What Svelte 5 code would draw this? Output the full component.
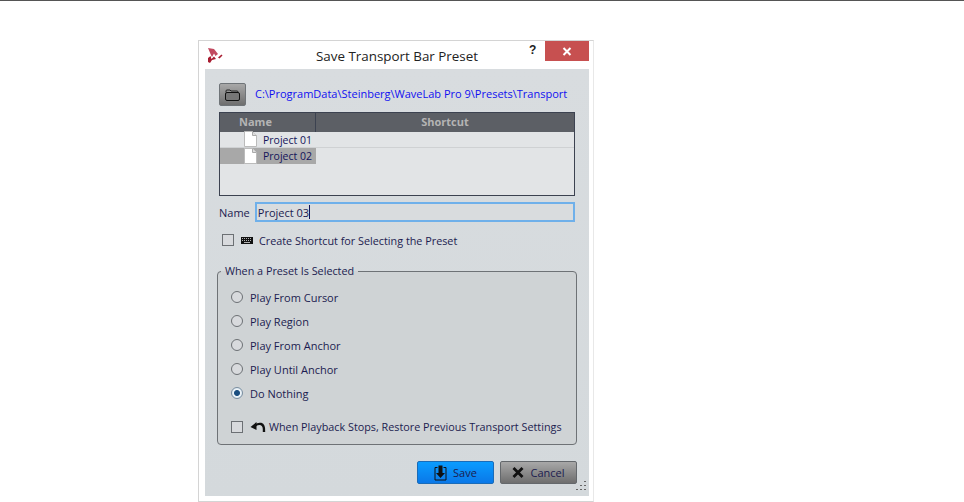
<script>
  const modes = ['Play From Cursor', 'Play Region', 'Play From Anchor', 'Play Until Anchor', 'Do Nothing'];
  const presets = ['Project 01', 'Project 02'];
  let selected = 'Do Nothing';
  let name = 'Project 03';
</script>

<div class="page">
  <div class="dialog">
    <div class="titlebar">
      <svg class="logo" width="17" height="17" viewBox="0 0 17 17">
        <path d="M1 1 L7 2 L11 7 L8.500 9 L7 6.500 L5 10 L3.500 7 Z" fill="#c24a60" />
        <path d="M1 11 L3.500 9 L4.500 12 L7 9.500 L9 12 L5 13 L3 16 L1 15 Z" fill="#a81c30" />
        <path d="M11 10.500 L14.500 7.500 L15.500 8.500 L12.500 11.500 Z" fill="#a81c30" />
      </svg>
      <span class="title">Save Transport Bar Preset</span>
      <span class="help">?</span>
      <span class="close">
        <svg width="10" height="9" viewBox="0 0 10 9"><path d="M1.500 1 L8.500 8 M8.500 1 L1.500 8" stroke="#fff" stroke-width="2" /></svg>
      </span>
    </div>
    <div class="body">
      <div class="pathrow">
        <button class="folder" type="button">
          <svg width="15" height="12" viewBox="0 0 15 12">
            <path d="M1 3.500 V2 Q1 1 2 1 H5 L6 2 H12 Q13 2 13 3 V3.500" fill="none" stroke="#222" />
            <rect x="0.500" y="3.500" width="14" height="8" rx="1.500" fill="#777" stroke="#111" />
          </svg>
        </button>
        <span class="path">C:\ProgramData\Steinberg\WaveLab Pro 9\Presets\Transport</span>
      </div>

      <div class="table">
        <div class="thead">
          <div class="col-name">Name</div>
          <div class="col-short">Shortcut</div>
        </div>
        {#each presets as preset, i}
          <div class="row" class:first={i === 0}>
            <div class="cell" class:sel={i === 1}>
              <svg class="doc" width="13" height="16" viewBox="0 0 13 16">
                <path d="M0.500 0.500 H8.500 L12.500 4.500 V15.500 H0.500 Z" fill="#fff" stroke="#bbb" />
                <path d="M8.500 0.500 V4.500 H12.500" fill="#ddd" stroke="#aaa" />
              </svg>
              <span>{preset}</span>
            </div>
          </div>
        {/each}
      </div>

      <div class="namerow">
        <span class="lbl">Name</span>
        <div class="input"><span>{name}</span><i class="caret"></i></div>
      </div>

      <div class="shortcut">
        <span class="check"></span>
        <svg class="kbd" width="12" height="7" viewBox="0 0 12 7">
          <rect width="12" height="7" fill="#111" />
          <path d="M1 1.500 H11 M1 3.500 H11" stroke="#ddd" stroke-width="0.800" stroke-dasharray="1 1" />
          <path d="M3 5.500 H9" stroke="#ddd" stroke-width="0.800" />
        </svg>
        <span>Create Shortcut for Selecting the Preset</span>
      </div>

      <fieldset class="group">
        <legend>When a Preset Is Selected</legend>
        {#each modes as mode}
          <div class="radio-row">
            <span class="radio" class:on={selected === mode}></span>
            <span>{mode}</span>
          </div>
        {/each}
        <div class="restore">
          <span class="check"></span>
          <svg class="undo" width="16" height="12" viewBox="0 0 16 12">
            <path d="M5 4.500 Q8 2.500 11 3 Q14.500 4 14 11" fill="none" stroke="#111" stroke-width="2.400" />
            <path d="M0.500 6 L6.500 1 V9 Z" fill="#111" />
          </svg>
          <span>When Playback Stops, Restore Previous Transport Settings</span>
        </div>
      </fieldset>

      <div class="buttons">
        <button class="btn save" type="button">
          <svg width="13" height="16" viewBox="0 0 13 16">
            <path d="M3.500 2.500 H1 V15 H12 V2.500 H9.500" fill="none" stroke="#111" />
            <path d="M4.500 0.500 H8.500 V8 H11 L6.500 13 L2 8 H4.500 Z" fill="#111" />
          </svg>
          <span>Save</span>
        </button>
        <button class="btn cancel" type="button">
          <svg width="12" height="11" viewBox="0 0 12 11"><path d="M1.500 1 L10.500 10 M10.500 1 L1.500 10" stroke="#111" stroke-width="2.800" /></svg>
          <span>Cancel</span>
        </button>
      </div>

      <svg class="grip" width="11" height="10" viewBox="0 0 11 10">
        <path d="M9 0 h2 v1 h-2 Z M5 4 h2 v1 h-2 Z M9 4 h2 v1 h-2 Z M1 8 h2 v1 h-2 Z M5 8 h2 v1 h-2 Z M9 8 h2 v1 h-2 Z" fill="#666" />
      </svg>
    </div>
  </div>
</div>

<style>
  :global(body) {
    margin: 0;
    background: #fff;
  }
  .page {
    height: 502px;
    border-top: 1px solid #555;
    padding: 39px 0 0 198px;
    box-sizing: border-box;
    overflow: hidden;
    font-family: "Open Sans", "Noto Sans", sans-serif;
    font-size: 10.800px;
    color: #1c1c50;
  }
  .dialog {
    width: 396px;
    height: 462px;
    box-sizing: border-box;
    border: 1px solid #d4d4d4;
    border-right-color: #e8e8e8;
    background: #fff;
    padding: 0 4px 5px 6px;
    display: flex;
    flex-direction: column;
  }
  .titlebar {
    height: 28px;
    position: relative;
    display: flex;
    align-items: center;
    justify-content: center;
    flex: none;
  }
  .logo {
    position: absolute;
    left: 2px;
    top: 6px;
  }
  .title {
    font-size: 13.400px;
    color: #222;
    margin-top: 2px;
  }
  .help {
    position: absolute;
    left: 324px;
    top: 2px;
    font: bold 12px "Liberation Sans", sans-serif;
    color: #222;
  }
  .close {
    position: absolute;
    right: 0;
    top: 0;
    width: 44px;
    height: 20px;
    background: #c75050;
    display: flex;
    align-items: center;
    justify-content: center;
  }
  .body {
    flex: 1;
    position: relative;
    background: linear-gradient(#d8dcdf, #d4d9dc);
    padding: 14px 12px 0 14px;
    box-sizing: border-box;
  }
  .pathrow {
    display: flex;
    align-items: center;
    gap: 9px;
    height: 23px;
  }
  .folder {
    width: 27px;
    height: 23px;
    padding: 0;
    border: 1px solid #6f7478;
    border-radius: 2px;
    background: linear-gradient(#a8a8a8, #6e6e6e);
    display: flex;
    align-items: center;
    justify-content: center;
  }
  .path {
    color: #1010f0;
    font-size: 11px;
    margin-top: -2px;
  }
  .table {
    width: 356px;
    height: 84px;
    margin-top: 6px;
    box-sizing: border-box;
    border: 1px solid #3c4250;
    background: #e2e4e6;
  }
  .thead {
    display: flex;
    height: 19px;
    background: #5c5f65;
    color: #b4b4b4;
    font-weight: 700;
    font-size: 11px;
    line-height: 18px;
  }
  .col-name {
    width: 96px;
    box-sizing: border-box;
    padding-left: 19px;
    border-right: 1px solid #3c4250;
  }
  .col-short {
    flex: 1;
    text-align: center;
  }
  .row {
    height: 15px;
    border-bottom: 1px solid #cfd1d3;
  }
  .row:not(.first) {
    border-bottom: 0;
  }
  .cell {
    width: 96px;
    height: 100%;
    display: flex;
    align-items: center;
    box-sizing: border-box;
    padding-left: 24px;
    gap: 6px;
    font-size: 10.500px;
    color: #14145a;
  }
  .cell.sel {
    background: #a8a8a8;
    height: 16px;
  }
  .doc {
    flex: none;
    margin-top: -1px;
  }
  .namerow {
    display: flex;
    align-items: center;
    gap: 5px;
    margin-top: 6px;
    height: 20px;
  }
  .lbl {
    font-size: 11px;
  }
  .input {
    width: 320px;
    height: 20px;
    box-sizing: border-box;
    border: 2px solid #6fb0ea;
    background: #d9dcde;
    display: flex;
    align-items: center;
    padding-left: 1px;
    font-size: 11px;
  }
  .caret {
    width: 1px;
    height: 14px;
    background: #14145a;
  }
  .shortcut {
    display: flex;
    align-items: center;
    margin-top: 12px;
    padding-left: 3px;
    height: 12px;
  }
  .check {
    width: 12px;
    height: 12px;
    box-sizing: border-box;
    border: 1px solid #6c7074;
    background: #d8dadd;
    flex: none;
  }
  .kbd {
    margin: 0 6px 0 7px;
  }
  .group {
    width: 360px;
    height: 181px;
    box-sizing: border-box;
    margin: 18px 0 0 -2px;
    padding: 0 0 0 13px;
    border: 1px solid #6e7276;
    border-radius: 4px;
    background: #cfd3d5;
    display: flex;
    flex-direction: column;
    position: relative;
  }
  legend {
    margin-left: -10px;
    padding: 0 4px 0 4px;
    font-size: 10.800px;
    line-height: 14px;
  }
  .radio-row {
    display: flex;
    align-items: center;
    gap: 7px;
    height: 24px;
    font-size: 11px;
  }
  .radio-row:first-of-type {
    margin-top: 7px;
  }
  .radio {
    width: 12px;
    height: 12px;
    box-sizing: border-box;
    border: 1px solid #6c7074;
    border-radius: 50%;
    background: #d8dadd;
    flex: none;
  }
  .radio.on {
    border-color: #7a8ea0;
    background: radial-gradient(circle, #1a4e80 0 2.500px, #eef4f8 3.500px, #c6dcee 100%);
  }
  .restore {
    display: flex;
    align-items: center;
    margin-top: 14px;
  }
  .undo {
    margin: 0 3px 0 7px;
  }
  .buttons {
    display: flex;
    justify-content: flex-end;
    gap: 6px;
    margin-top: 16px;
  }
  .btn {
    width: 77px;
    height: 23px;
    padding: 0;
    border-radius: 2px;
    display: flex;
    align-items: center;
    justify-content: center;
    gap: 6px;
    font: inherit;
    font-size: 11px;
    color: #1c1c50;
  }
  .save {
    border: 1px solid #1a6cb8;
    background: linear-gradient(#0a9cff, #0a78e8);
  }
  .cancel {
    border: 1px solid #64686c;
    background: linear-gradient(#a8a8a8, #6e6e6e);
  }
  .grip {
    position: absolute;
    right: 3px;
    bottom: 5px;
  }
</style>
